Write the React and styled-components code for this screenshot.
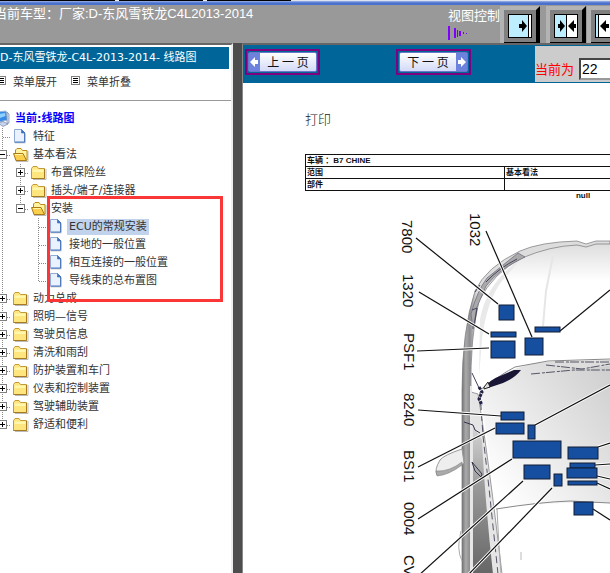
import React, { useState } from 'react'
import styled, { createGlobalStyle } from 'styled-components'

const GlobalStyle = createGlobalStyle`
    * {
        box-sizing: border-box;
    }
    body {
        margin: 0;
        background-color: #fff;
        font-family: "DejaVu Sans", "Noto Sans CJK SC", sans-serif;
        font-size: 11px;
        color: #333;
    }
`

const Page = styled.div`
    height: 100vh;
    display: flex;
    flex-direction: column;
    overflow: hidden;
`

const TabStrip = styled.div`
    height: 1px;
    flex: none;
    background: linear-gradient(to right, #000 115px, #eee 115px 119px, #000 119px 203px, #eee 203px 207px, #000 207px 291px, #dde3ee 291px);
`

const BlueLine = styled.div`
    height: 4px;
    flex: none;
    background: linear-gradient(#9db4ea, #4a72cc 50%);
`

const TopBar = styled.header`
    height: 38px;
    flex: none;
    display: flex;
    background-color: #999;
    color: #fff;
    font-family: "Liberation Sans", "Noto Sans CJK SC", sans-serif;
    font-size: 13px;
    line-height: 18px;
    white-space: nowrap;
`

const CarTitle = styled.div`
    margin-left: -6px;
`

const ViewControl = styled.div`
    display: flex;
    margin-left: auto;
    margin-right: -17px;
`

const ViewLabel = styled.div`
    display: flex;
    flex-direction: column;
    padding-top: 2px;
    svg {
        display: block;
    }
`

const ButtonGroup = styled.div`
    display: flex;
    gap: ${props => props.gap};
`

const ViewButton = styled.button`
    display: block;
    padding: 0;
    border: none;
    background: none;
    cursor: pointer;
    svg {
        display: block;
    }
`

const Frames = styled.div`
    flex: 1;
    min-height: 0;
    display: flex;
`

const Left = styled.aside`
    width: 233px;
    flex: none;
    overflow: hidden;
    border-top: 2px solid #666;
    border-right: 2px solid #ececec;
    white-space: nowrap;
`

const Heading = styled.h1`
    margin: 2px 2px 0 0;
    height: 22px;
    line-height: 22px;
    background-color: #069;
    color: #fff;
    font-size: 11px;
    font-weight: normal;
`

const MenuTools = styled.div`
    display: flex;
    gap: 14px;
    height: 32px;
    padding-bottom: 8px;
    margin-left: -3px;
    border-bottom: 1px solid #999;
`

const MenuButton = styled.button`
    display: flex;
    align-items: center;
    gap: 7px;
    padding: 0;
    border: none;
    background: none;
    color: #333;
    font: inherit;
    cursor: pointer;
`

const Tree = styled.nav`
    position: relative;
    margin-left: -7px;
    padding-top: 9px;
`

const TreeRow = styled.div`
    display: flex;
    height: 18px;
    align-items: center;
    svg {
        display: block;
        flex: none;
    }
`

const TreeLink = styled.a`
    margin-left: 2px;
    padding: 0 2px;
    line-height: 16px;
    color: ${props => props.$root ? "#00f" : "#333"};
    font-weight: ${props => props.$root ? "bold" : "normal"};
    background-color: ${props => props.$active ? "#c0d2ec" : "transparent"};
    text-decoration: none;
`

const Highlight = styled.div`
    position: absolute;
    left: 54px;
    top: 95px;
    width: 176px;
    height: 106px;
    border: 3px solid #fa3637;
    pointer-events: none;
`

const Divider = styled.div`
    width: 9px;
    flex: none;
    background-color: #4d4d4d;
`

const Right = styled.main`
    flex: 1;
    min-width: 0;
    overflow: hidden;
    border-top: 2px solid #666;
    border-left: 1px solid #888;
`

const Pager = styled.div`
    display: flex;
    height: 38px;
    padding: 1px 0 1px 2px;
    background-color: #069;
`

const PageFrame = styled.div`
    display: flex;
    flex: none;
    align-self: flex-start;
    width: 75px;
    height: 26px;
    margin: 3px 76px 0 0;
    padding: 1px;
    border: 2px solid #800080;
    &:nth-child(2) {
        margin-right: 0;
    }
`

const PageButton = styled.button`
    display: flex;
    flex: 1;
    flex-direction: ${props => props.$next ? "row-reverse" : "row"};
    align-items: stretch;
    padding: 0;
    border: 1px solid #6878c8;
    border-radius: 2px;
    background: linear-gradient(#fff, #d3daf7);
    color: #111;
    font-family: "Noto Sans CJK SC", sans-serif;
    font-size: 12px;
    line-height: 18px;
    white-space: nowrap;
    cursor: pointer;
    span {
        flex: 1;
    }
    svg {
        display: block;
    }
`

const Current = styled.label`
    display: flex;
    flex: none;
    align-items: center;
    width: 75px;
    margin-left: auto;
    padding-top: 9px;
    gap: 5px;
    overflow: hidden;
    background-color: #ccc;
    color: #f00;
    font-family: "Noto Sans CJK SC", sans-serif;
    font-size: 13px;
    white-space: nowrap;
`

const PageInput = styled.input`
    width: 60px;
    height: 22px;
    flex: none;
    padding: 0 1px;
    border: 2px inset #999;
    background-color: #fff;
    color: #000;
    font-family: "Liberation Sans", sans-serif;
    font-size: 14px;
`

const Content = styled.div`
    padding: 26px 0 0 62px;
`

const Print = styled.a`
    display: block;
    height: 45px;
    line-height: 22px;
    color: #222;
    font-family: "Liberation Serif", "Noto Sans CJK SC", serif;
    font-size: 13px;
    font-weight: 300;
    text-decoration: none;
`

const InfoTable = styled.table`
    width: 560px;
    table-layout: fixed;
    border-collapse: collapse;
    color: #111;
    font-family: "Liberation Sans", "Noto Sans CJK SC", sans-serif;
    font-size: 8px;
    font-weight: bold;
    line-height: 11px;
    td {
        height: 12px;
        padding: 0 1px;
        border: 1px solid #111;
    }
`

const NullText = styled.div`
    width: 560px;
    height: 12px;
    padding-right: 4px;
    color: #111;
    font: bold 8px/10px "Liberation Sans", sans-serif;
    text-align: center;
`

const Drawing = styled.svg`
    display: block;
    text {
        font-family: "Liberation Sans", sans-serif;
        font-size: 15px;
        fill: #111;
    }
`

const ROWS = [
  { level: 0, icon: "computer", text: "当前:线路图" },
  { level: 1, icon: "page", text: "特征" },
  { level: 1, icon: "open", sign: "-", text: "基本看法" },
  { level: 2, icon: "folder", sign: "+", text: "布置保险丝" },
  { level: 2, icon: "folder", sign: "+", text: "插头/端子/连接器" },
  { level: 2, icon: "open", sign: "-", last: true, text: "安装" },
  { level: 3, icon: "page", text: "ECU的常规安装" },
  { level: 3, icon: "page", text: "接地的一般位置" },
  { level: 3, icon: "page", text: "相互连接的一般位置" },
  { level: 3, icon: "page", last: true, text: "导线束的总布置图" },
  { level: 1, icon: "folder", sign: "+", text: "动力总成" },
  { level: 1, icon: "folder", sign: "+", text: "照明—信号" },
  { level: 1, icon: "folder", sign: "+", text: "驾驶员信息" },
  { level: 1, icon: "folder", sign: "+", text: "清洗和雨刮" },
  { level: 1, icon: "folder", sign: "+", text: "防护装置和车门" },
  { level: 1, icon: "folder", sign: "+", text: "仪表和控制装置" },
  { level: 1, icon: "folder", sign: "+", text: "驾驶辅助装置" },
  { level: 1, icon: "folder", sign: "+", last: true, text: "舒适和便利" },
]

const BOXES = [
  [499, 304, 15, 15], [491, 331, 25, 5], [491, 340, 24, 17], [525, 337, 18, 17],
  [535, 326, 25, 5], [501, 411, 23, 8], [496, 422, 28, 11], [528, 424, 7, 14],
  [513, 440, 48, 17], [568, 446, 30, 12], [570, 462, 25, 5], [567, 467, 30, 10],
  [568, 480, 29, 4], [524, 464, 26, 14], [554, 473, 8, 12], [574, 501, 19, 13],
]

const LINES = [
  [416, 237, 498, 303], [486, 230, 532, 336], [419, 291, 489, 333], [417, 350, 489, 347],
  [560, 330, 610, 289], [418, 409, 501, 415], [418, 466, 495, 427], [535, 424, 610, 384],
  [418, 518, 512, 458], [418, 575, 523, 480], [467, 575, 552, 487], [598, 446, 610, 442],
  [595, 464, 610, 463], [597, 475, 610, 478], [597, 482, 610, 488], [593, 508, 610, 519],
]

const LABELS = [
  ["7800", 402, 219], ["1032", 470, 212], ["1320", 403, 273], ["PSF1", 404, 332],
  ["8240", 404, 392], ["BSI1", 404, 449], ["0004", 404, 501], ["CV", 404, 554],
]

const Join = ({ line, branch, last, sign }) => (
  <svg width="18" height="18" shapeRendering="crispEdges" aria-hidden="true">
    {line && <path d={last ? "M9.5 0V9" : "M9.5 0V18"} stroke="#888" strokeDasharray="1 1" />}
    {branch && <path d="M10 9.5H18" stroke="#888" strokeDasharray="1 1" />}
    {sign && <rect x="5.5" y="4.5" width="8" height="8" fill="#fff" stroke="#808080" />}
    {sign && <path d="M7 8.5H12" stroke="#000" />}
    {sign === "+" && <path d="M9.5 6V11" stroke="#000" />}
  </svg>
)

const NodeIcon = ({ name }) => (
  <svg width="18" height="18" viewBox="0 0 18 18" aria-hidden="true">
    {name === "page" && <>
      <path d="M4 2.5H11L14.5 6V15.5H4Z" fill="#aaa" opacity=".5" />
      <path d="M3.5 1.5H10.5L14 5V14.5H3.5Z" fill="#eaf2ff" stroke="#8eacd8" />
      <path d="M10.5 1.5V5H14Z" fill="#3f76c6" stroke="#3968b0" strokeWidth=".6" />
      <path d="M13.5 5V14H4" fill="none" stroke="#4f78b8" />
    </>}
    {name === "folder" && <>
      <path d="M4 15.5H17V5" fill="none" stroke="#bbb" />
      <path d="M2.5 4.5L4 2.5H8L9.5 4.5H15.5V14.5H2.5Z" fill="#ffe57e" stroke="#c49a34" />
      <path d="M3.5 5.5H14.5V8H3.5Z" fill="#fff7ac" />
      <path d="M2.5 14.5H15.5V5" fill="none" stroke="#a67a20" />
    </>}
    {name === "open" && <>
      <path d="M5 15.5H17V5" fill="none" stroke="#bbb" />
      <path d="M4.5 14L4.5 4L6 2.5H10L11.5 4.5H16V14Z" fill="#fff3a0" stroke="#b78a20" />
      <path d="M2.5 7.5H12L15.5 14.5H5Z" fill="#f9cf4d" stroke="#a97a16" />
      <path d="M4 8.5H11.5" stroke="#fff5a8" />
    </>}
    {name === "computer" && <>
      <path d="M4 2L13 1L14.5 10L6 12Z" fill="#3689e4" stroke="#9db6d8" />
      <path d="M6 4L12 3L12.5 6L7 8Z" fill="#8bd0ff" />
      <path d="M14 2L16 4V13L14 14Z" fill="#d6deed" stroke="#7186ad" strokeWidth=".7" />
      <path d="M5 13L10 11.5L15 14L10 16.5Z" fill="#c9d5ea" stroke="#7186ad" strokeWidth=".7" />
    </>}
  </svg>
)

const TreeNode = ({ row, active, onSelect }) => {
  const cells = []
  for (let i = 1; i <= row.level; i++) {
    const own = i === row.level
    cells.push(<Join key={i} line={own || i === 1} branch={own} last={own && row.last} sign={own && row.sign} />)
  }
  return (
    <TreeRow>
      {cells}
      <NodeIcon name={row.icon} />
      <TreeLink href="#" $root={row.level === 0} $active={active} onClick={onSelect}>{row.text}</TreeLink>
    </TreeRow>
  )
}

const MenuIcon = () => (
  <svg width="9" height="9" shapeRendering="crispEdges" aria-hidden="true">
    <rect x=".5" y=".5" width="8" height="8" fill="#fff" stroke="#808080" />
    <path d="M2 2.5H7M2 4.5H7M2 6.5H7" stroke="#000" />
  </svg>
)

const ViewIcon = ({ kind }) => (
  <svg width="40" height="38" viewBox="0 0 40 38" aria-hidden="true">
    <rect y="1" width="40" height="37" fill="#b3b3b3" />
    <path d="M36 5L40 1V38H4V36H36Z" fill="#000" />
    <rect x="4" y="5" width="32" height="32" fill="#808080" />
    <path d="M4 37.5H40" stroke="#000" />
    <rect x="8.5" y="9.5" width="23" height="23" fill="#fff" stroke="#000" />
    {kind === "left" && <path d="M9 10H28V32H9Z" fill="#bdeeff" />}
    {kind === "left" && <path d="M28.5 9V33" stroke="#000" />}
    {kind === "both" && <path d="M9 10H20V32H9Z" fill="#bdeeff" />}
    {kind === "both" && <path d="M20.5 9V33" stroke="#000" />}
    {kind === "right" && <path d="M9 10H11V32H9Z" fill="#bdeeff" />}
    {kind === "right" && <path d="M11.5 9V33" stroke="#000" />}
    {kind === "left" && <path d="M19 19H22V15L27 21L22 27V23H19Z" />}
    {kind === "both" && <path d="M12 19H14V15L19 21L14 27V23H12ZM30 19H28V15L22 21L28 27V23H30Z" />}
    {kind === "right" && <path d="M22 19H19V15L13 21L19 27V23H22Z" />}
  </svg>
)

const ArrowIcon = ({ next }) => (
  <svg width="11" height="18" viewBox="0 0 11 18" aria-hidden="true">
    <rect width="11" height="18" fill="#6d82dc" />
    <path
      d={next ? "M2 7H5V4L10 9L5 14V11H2Z" : "M9 7H6V4L1 9L6 14V11H9Z"}
      fill="#fff"
    />
  </svg>
)

const CarDrawing = () => (
  <Drawing width="305" height="371" viewBox="305 202 305 371" role="img" aria-label="B7 CHINE">
    <defs>
      <linearGradient id="side" x1="461" x2="477" y1="0" y2="0" gradientUnits="userSpaceOnUse">
        <stop offset="0" stopColor="#666" />
        <stop offset=".3" stopColor="#aaa" />
        <stop offset=".55" stopColor="#8d8d91" />
        <stop offset="1" stopColor="#ddd" />
      </linearGradient>
      <linearGradient id="glass" x1="480" x2="610" y1="470" y2="370" gradientUnits="userSpaceOnUse">
        <stop offset="0" stopColor="#fff" />
        <stop offset="1" stopColor="#cfcfcf" />
      </linearGradient>
      <linearGradient id="window" x1="0" x2="0" y1="400" y2="573" gradientUnits="userSpaceOnUse">
        <stop offset="0" stopColor="#eee" />
        <stop offset=".5" stopColor="#999" />
        <stop offset="1" stopColor="#666" />
      </linearGradient>
      <linearGradient id="bonnet" x1="0" x2="0" y1="242" y2="280" gradientUnits="userSpaceOnUse">
        <stop offset="0" stopColor="#ddd" />
        <stop offset="1" stopColor="#fff" />
      </linearGradient>
    </defs>

    {/* bonnet and front bumper */}
    <path d="M610 243Q560 241 525 255Q493 273 480 315L477 390L520 365L610 360Z" fill="url(#bonnet)" />
    <path d="M480 318Q487 281 520 259L502 280Q487 299 482 338L479 376Z" fill="#e9e9e9" />
    <path d="M610 240L596 240L586 243L577 240Q540 241 520 250Q486 266 475 290Q462 329 462 390V573H471V390Q470 337 479 300Q493 272 522 257Q550 245 577 244L586 246L596 243H610Z" fill="url(#side)" stroke="#77777b" strokeWidth=".7" />
    <path d="M518 252L525 256Q500 267 486 285L477 306L473 328L471 313Q477 290 487 277Z" fill="#aaa" stroke="#66667a" strokeWidth=".7" />
    <path d="M486 281Q499 267 517 258M475 291L480 284M472 309L477 307L474 326M472 372L480 389" fill="none" stroke="#44445f" />
    <path d="M553 255L546 290L543 325" fill="none" stroke="#e6e6e6" strokeWidth="2" />

    {/* windscreen */}
    <path d="M480 391Q508 364 545 361L610 359V502Q555 500 496 508Q488 441 480 391Z" fill="url(#glass)" />
    <path d="M480 389Q503 372 515 366L548 360L610 358" fill="none" stroke="#888" />
    <path d="M544 361L610 360V365L575 368L546 365Z" fill="#ddd" />
    <path d="M531 373L574 369H610M546 364L582 368L610 363M555 361L610 361" fill="none" stroke="#555566" strokeDasharray="9 2 3 1" />
    <path d="M486 386Q489 379 500 375L514 369L521 369Q515 377 503 382L488 387Z" fill="#181535" />
    <path d="M484 386L488 381L490 386L484 388Z" fill="#ddd" stroke="#222" />
    <path d="M496 508Q540 501 570 500L610 502" fill="none" stroke="#888" />

    {/* pillar, side windows and mirror */}
    <path d="M471 391L478 393Q489 461 502 573H471Z" fill="#e5e5e5" stroke="#777" strokeWidth=".7" />
    <path d="M473 425L482 439Q485 500 493 573H473Z" fill="url(#window)" />
    <path d="M480 391L483 435L489 487L498 573" fill="none" stroke="#55556a" strokeDasharray="7 4" />
    <path d="M479 386L482 391L479 398L482 404" fill="none" stroke="#222244" strokeWidth="3" strokeDasharray="3 1" />
    <path d="M471 385V573" stroke="#e7e7e7" strokeWidth="2" />
    <path d="M464 421L473 424L475 429L480 432M472 461L482 473L481 476L475 470Z" fill="none" stroke="#343450" />
    <path d="M497 508L499 545L501 573M461 530Q456 548 462 560" fill="none" stroke="#aaa" />
    <path d="M462 448Q444 454 440 459Q434 469 437 474Q446 474 464 462Z" fill="#eee" stroke="#999" />
    <path d="M436 470Q449 471 462 461V464Q449 474 437 475Z" fill="#aaa" stroke="#777" strokeWidth=".5" />
    <path d="M521 551V559" stroke="#bbb" />

    {LINES.map(([x1, y1, x2, y2], i) => (
      <g key={i}>
        <line x1={x1} y1={y1} x2={x2} y2={y2} stroke="#fff" strokeWidth="3" />
        <line x1={x1} y1={y1} x2={x2} y2={y2} stroke="#111" strokeWidth="1.2" />
      </g>
    ))}
    {BOXES.map(([x, y, width, height], i) => (
      <rect key={i} x={x} y={y} width={width} height={height} fill="#174fa0" stroke="#111d35" />
    ))}
    {LABELS.map(([text, x, y]) => (
      <text key={text} transform={`translate(${x} ${y}) rotate(90)`}>{text}</text>
    ))}
  </Drawing>
)

const App = () => {
  const [active, setActive] = useState("ECU的常规安装")
  const [page, setPage] = useState(22)

  return (
    <Page>
      <GlobalStyle />
      <TabStrip />
      <BlueLine />
      <TopBar>
        <CarTitle>当前车型：厂家:D-东风雪铁龙C4L2013-2014</CarTitle>
        <ViewControl>
          <ViewLabel>
            视图控制
            <svg width="20" height="16" shapeRendering="crispEdges" aria-hidden="true">
              <path d="M0 1H2V15H0ZM6 3H8V13H6ZM9 5H10V12H9ZM11 6H13V11H11ZM15 7H16V9H15ZM18 8H19V9H18Z" fill="#8000ff" />
            </svg>
          </ViewLabel>
          <ButtonGroup gap="6px">
            <ViewButton aria-label="左"><ViewIcon kind="left" /></ViewButton>
            <ButtonGroup gap="1px">
              <ViewButton aria-label="中"><ViewIcon kind="both" /></ViewButton>
              <ViewButton aria-label="右"><ViewIcon kind="right" /></ViewButton>
            </ButtonGroup>
          </ButtonGroup>
        </ViewControl>
      </TopBar>
      <Frames>
        <Left>
          <Heading>D-东风雪铁龙-C4L-2013-2014- 线路图</Heading>
          <MenuTools>
            <MenuButton><MenuIcon />菜单展开</MenuButton>
            <MenuButton><MenuIcon />菜单折叠</MenuButton>
          </MenuTools>
          <Tree>
            {ROWS.map(row => (
              <TreeNode key={row.text} row={row} active={row.text === active} onSelect={() => setActive(row.text)} />
            ))}
            <Highlight />
          </Tree>
        </Left>
        <Divider />
        <Right>
          <Pager>
            <PageFrame>
              <PageButton onClick={() => setPage(Number(page) - 1)}>
                <ArrowIcon /><span>上 一 页</span>
              </PageButton>
            </PageFrame>
            <PageFrame>
              <PageButton $next onClick={() => setPage(Number(page) + 1)}>
                <ArrowIcon next /><span>下 一 页</span>
              </PageButton>
            </PageFrame>
            <Current>
              当前为
              <PageInput value={page} onChange={e => setPage(e.target.value)} />
            </Current>
          </Pager>
          <Content>
            <Print href="#">打印</Print>
            <InfoTable>
              <colgroup>
                <col width="199" />
                <col />
              </colgroup>
              <tbody>
                <tr><td colSpan="2">车辆 ：B7 CHINE</td></tr>
                <tr><td>范围</td><td>基本看法</td></tr>
                <tr><td>部件</td><td></td></tr>
              </tbody>
            </InfoTable>
            <NullText>null</NullText>
            <CarDrawing />
          </Content>
        </Right>
      </Frames>
    </Page>
  )
}

export default App
